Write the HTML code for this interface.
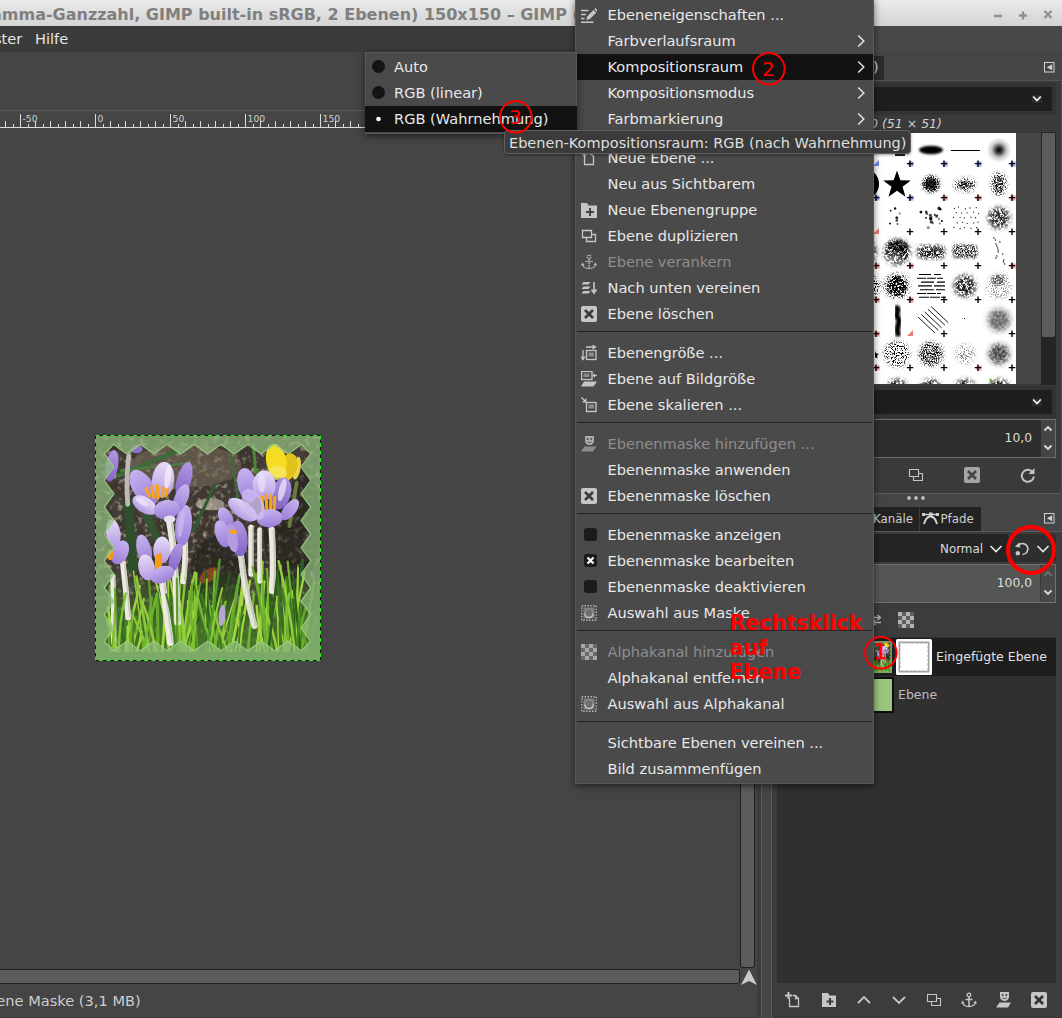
<!DOCTYPE html>
<html lang="de"><head><meta charset="utf-8"><title>GIMP</title>
<style>
html,body{margin:0;padding:0}
body{width:1062px;height:1018px;position:relative;overflow:hidden;background:#454545;font-family:"DejaVu Sans","Liberation Sans",sans-serif;font-size:14.6px;color:#e8e8e8}
.a{position:absolute}
.t{position:absolute;white-space:pre;line-height:1}
#titlebar{left:0;top:0;width:1062px;height:26px;background:linear-gradient(#ebebeb,#dcdcdc 60%,#d5d5d5)}
#title{left:-9px;top:7px;font-weight:700;font-size:16px;color:#7f7f7f}
#menubar{left:0;top:26px;width:756px;height:26px;background:#3b3b3b}
#rtop{left:756px;top:26px;width:306px;height:26px;background:#484848}
#dock{left:756px;top:52px;width:306px;height:966px;background:#454545}
/* menu */
.menu{background:#4a4a4a;box-shadow:0 2px 7px rgba(0,0,0,.55);border:1px solid #585858;box-sizing:border-box}
.mi{position:absolute;left:1px;right:0;height:26px}
.mi .lb{position:absolute;left:30.500px;top:5px;white-space:pre;line-height:16px}
.mi.sel{background:#121212}
.mi.dis .lb{color:#8e8e8e}
.sep{position:absolute;left:1px;right:1px;height:1px;background:#262626}
.arr{position:absolute;right:8.500px;top:6px;width:8px;height:14px}
.ic{position:absolute;left:4px;top:5px;width:16px;height:16px}
.chk{position:absolute;left:7px;top:6px;width:13px;height:13px;border-radius:3px;background:#1b1b1b}
.rad{position:absolute;left:7px;top:6px;width:13px;height:13px;border-radius:50%;background:#141414}
.red{color:#f00}
</style></head><body>
<!--BASE-->
<div id="titlebar" class="a"></div>
<div id="title" class="t">amma-Ganzzahl, GIMP built-in sRGB, 2 Ebenen) 150x150 – GIMP (</div>
<svg class="a" style="left:990px;top:6px" width="70" height="18" viewBox="0 0 70 18"><g stroke="#8f8f8f" stroke-width="2.300" fill="none"><path d="M4 10h8M29 9.5h8M33 5.5v8M54.500 5l7 7M61.500 5l-7 7"/></g></svg>
<div id="menubar" class="a"></div>
<div class="t" style="left:-6px;top:32px;color:#e6e6e6">ster</div>
<div class="t" style="left:35px;top:32px;color:#e6e6e6">Hilfe</div>
<div id="rtop" class="a"></div>
<div id="dock" class="a"></div>
<svg class="a" style="left:0;top:108px" width="742" height="22" viewBox="0 108 742 22"><path d="M0 110.5H742" stroke="#585858" stroke-width="1" fill="none"/><path d="M0 127.500H742 M20.5 114V128 M95.5 114V128 M170.5 114V128 M245.5 114V128 M320.5 114V128 M395.5 114V128 M470.5 114V128 M545.5 114V128 M620.5 114V128 M695.5 114V128 M5.5 121V128 M35.5 121V128 M50.5 121V128 M65.5 121V128 M80.5 121V128 M110.5 121V128 M125.5 121V128 M140.5 121V128 M155.5 121V128 M185.5 121V128 M200.5 121V128 M215.5 121V128 M230.5 121V128 M260.5 121V128 M275.5 121V128 M290.5 121V128 M305.5 121V128 M335.5 121V128 M350.5 121V128 M365.5 121V128 M380.5 121V128 M410.5 121V128 M425.5 121V128 M440.5 121V128 M455.5 121V128 M485.5 121V128 M500.5 121V128 M515.5 121V128 M530.5 121V128 M560.5 121V128 M575.5 121V128 M590.5 121V128 M605.5 121V128 M635.5 121V128 M650.5 121V128 M665.5 121V128 M680.5 121V128 M710.5 121V128 M725.5 121V128 M740.5 121V128 M13.5 124V128 M28.5 124V128 M43.5 124V128 M58.5 124V128 M73.5 124V128 M88.5 124V128 M103.5 124V128 M118.5 124V128 M133.5 124V128 M148.5 124V128 M163.5 124V128 M178.5 124V128 M193.5 124V128 M208.5 124V128 M223.5 124V128 M238.5 124V128 M253.5 124V128 M268.5 124V128 M283.5 124V128 M298.5 124V128 M313.5 124V128 M328.5 124V128 M343.5 124V128 M358.5 124V128 M373.5 124V128 M388.5 124V128 M403.5 124V128 M418.5 124V128 M433.5 124V128 M448.5 124V128 M463.5 124V128 M478.5 124V128 M493.5 124V128 M508.5 124V128 M523.5 124V128 M538.5 124V128 M553.5 124V128 M568.5 124V128 M583.5 124V128 M598.5 124V128 M613.5 124V128 M628.5 124V128 M643.5 124V128 M658.5 124V128 M673.5 124V128 M688.5 124V128 M703.5 124V128 M718.5 124V128 M733.5 124V128" stroke="#dcdcdc" stroke-width="1" fill="none"/><g font-family="DejaVu Sans, Liberation Sans, sans-serif" font-size="9.300" fill="#cfcfcf"><text x="22.5" y="122">-50</text><text x="97.5" y="122">0</text><text x="172.5" y="122">50</text><text x="247.5" y="122">100</text><text x="322.5" y="122">150</text><text x="397.5" y="122">200</text><text x="472.5" y="122">250</text><text x="547.5" y="122">300</text><text x="622.5" y="122">350</text><text x="697.5" y="122">400</text></g></svg>
<div class="a" style="left:740px;top:128px;width:15px;height:840px;box-sizing:border-box;background:#5c5c5c;border:1px solid #1f1f1f;border-radius:0 0 3px 3px"></div>
<div class="a" style="left:-4px;top:969px;width:744px;height:15px;box-sizing:border-box;background:#5c5c5c;border:1px solid #1f1f1f;border-radius:3px"></div>
<svg class="a" style="left:740px;top:968px" width="18" height="18" viewBox="0 0 18 18"><path d="M9 1.500L17 17 9 13 1 17Z" fill="#c9c9c9"/></svg>
<div class="t" style="left:-3.700px;top:994px;color:#cdcdcd">ene Maske (3,1 MB)</div>
<div class="a" style="left:0;top:1016.500px;width:757px;height:2px;background:#3b3b3b"></div>
<div class="a" style="left:757px;top:52px;width:20px;height:966px;background:#3c3c3c"></div>
<div class="a" style="left:761px;top:52px;width:11px;height:966px;background:#464646;border-left:1px solid #5a5a5a;border-right:1px solid #5a5a5a;box-sizing:border-box"></div>
<svg class="a" style="left:95px;top:435px" width="226" height="226" viewBox="0 0 226 226"><defs>
<filter id="soil" x="0" y="0" width="100%" height="100%"><feTurbulence type="fractalNoise" baseFrequency="0.02" numOctaves="3" seed="3" result="n"/><feColorMatrix type="matrix" values="0 0 0 0 0.060  0 0 0 0 0.055  0 0 0 0 0.050  2.400 0 0 0 -0.900"/></filter>
<filter id="soil2" x="0" y="0" width="100%" height="100%"><feTurbulence type="fractalNoise" baseFrequency="0.045" numOctaves="2" seed="11"/><feColorMatrix type="matrix" values="0 0 0 0 0.600  0 0 0 0 0.500  0 0 0 0 0.360  0 3.200 0 0 -1.700"/></filter>
<filter id="bl" x="-10%" y="-10%" width="120%" height="120%"><feGaussianBlur stdDeviation="2.200"/></filter>
<linearGradient id="pg" x1="0" y1="0" x2="0" y2="1"><stop offset="0" stop-color="#c6b3ee"/><stop offset="1" stop-color="#9b7ed8"/></linearGradient>
<linearGradient id="pl" x1="0" y1="0" x2="0" y2="1"><stop offset="0" stop-color="#e6dcf9"/><stop offset="1" stop-color="#b39ae4"/></linearGradient>
<linearGradient id="pd" x1="0" y1="0" x2="0" y2="1"><stop offset="0" stop-color="#b098e2"/><stop offset="1" stop-color="#8464c8"/></linearGradient>
<linearGradient id="st" x1="0" y1="0" x2="1" y2="0"><stop offset="0" stop-color="#c9c8bc"/><stop offset=".45" stop-color="#f4f3ea"/><stop offset="1" stop-color="#b8b8a8"/></linearGradient>
<clipPath id="ic"><rect x="42" y="42" width="935" height="935"/></clipPath>
</defs><g id="flw" transform="scale(0.24067) translate(-42 -42)"><g clip-path="url(#ic)"><rect x="42" y="42" width="935" height="935" fill="#3c352d"/>
<rect x="42" y="42" width="935" height="935" fill="#000" filter="url(#soil)"/>
<rect x="42" y="42" width="935" height="935" fill="#000" filter="url(#soil2)" opacity=".75"/>
<ellipse cx="420" cy="170" rx="230" ry="90" fill="#7a6e5c" opacity=".55" filter="url(#bl)"/>
<ellipse cx="520" cy="330" rx="60" ry="25" fill="#d8d2c0" opacity=".55" filter="url(#bl)"/>
<ellipse cx="860" cy="420" rx="120" ry="260" fill="#1c1a17" opacity=".55" filter="url(#bl)"/>
<ellipse cx="560" cy="600" rx="120" ry="140" fill="#1c1a17" opacity=".5" filter="url(#bl)"/>
<path d="M140 210L380 110" stroke="#3e6a38" stroke-width="18" stroke-linecap="round" fill="none"/>
<path d="M150 190L420 160" stroke="#4f7d45" stroke-width="10" stroke-linecap="round" fill="none"/>
<path d="M600 90L640 330" stroke="#3f6a3a" stroke-width="10" stroke-linecap="round" fill="none"/>
<path d="M700 80L710 200" stroke="#4c8a3a" stroke-width="12" stroke-linecap="round" fill="none"/>
<path d="M450 440L540 250" stroke="#2e5a32" stroke-width="12" stroke-linecap="round" fill="none"/>
<path d="M180 330L200 600" stroke="#2f4f2c" stroke-width="40" stroke-linecap="round" fill="none"/>
<path d="M250 360L300 470" stroke="#33552f" stroke-width="30" stroke-linecap="round" fill="none"/>
<path d="M880 240L850 420" stroke="#6a7a40" stroke-width="16" stroke-linecap="round" fill="none"/>
<path d="M905 560L870 900" stroke="#2f5a2c" stroke-width="14" stroke-linecap="round" fill="none"/>
<ellipse cx="515" cy="625" rx="45" ry="25" transform="rotate(-35 515 625)" fill="#9a4a22" opacity=".85"/>
<ellipse cx="200" cy="830" rx="42" ry="40" transform="rotate(0 200 830)" fill="#5c8650" />
<linearGradient id="gb" x1="0" y1="0" x2="0" y2="1"><stop offset="0" stop-color="#3a6a22" stop-opacity="0"/><stop offset=".5" stop-color="#3f7424" stop-opacity=".7"/><stop offset="1" stop-color="#4a8428" stop-opacity=".9"/></linearGradient><rect x="42" y="600" width="935" height="377" fill="url(#gb)"/>
<path d="M102 940Q95 804 103 667" stroke="#6aa82c" stroke-width="8" stroke-linecap="round" fill="none"/>
<path d="M284 940Q279 787 265 633" stroke="#5e9e28" stroke-width="10" stroke-linecap="round" fill="none"/>
<path d="M136 940Q114 878 91 816" stroke="#a4d640" stroke-width="6" stroke-linecap="round" fill="none"/>
<path d="M915 940Q949 867 960 795" stroke="#5e9e28" stroke-width="9" stroke-linecap="round" fill="none"/>
<path d="M380 940Q415 814 438 689" stroke="#2e5e1c" stroke-width="9" stroke-linecap="round" fill="none"/>
<path d="M351 940Q372 785 389 630" stroke="#6aa82c" stroke-width="7" stroke-linecap="round" fill="none"/>
<path d="M645 940Q646 793 662 647" stroke="#98cc3c" stroke-width="8" stroke-linecap="round" fill="none"/>
<path d="M848 940Q836 807 848 675" stroke="#2e5e1c" stroke-width="8" stroke-linecap="round" fill="none"/>
<path d="M843 940Q838 826 863 713" stroke="#3c7a22" stroke-width="8" stroke-linecap="round" fill="none"/>
<path d="M468 940Q457 804 470 668" stroke="#5e9e28" stroke-width="7" stroke-linecap="round" fill="none"/>
<path d="M130 940Q103 874 101 808" stroke="#98cc3c" stroke-width="8" stroke-linecap="round" fill="none"/>
<path d="M780 940Q737 779 711 618" stroke="#6aa82c" stroke-width="10" stroke-linecap="round" fill="none"/>
<path d="M193 940Q222 831 245 723" stroke="#98cc3c" stroke-width="9" stroke-linecap="round" fill="none"/>
<path d="M646 940Q617 870 608 800" stroke="#3c7a22" stroke-width="8" stroke-linecap="round" fill="none"/>
<path d="M728 940Q737 754 738 568" stroke="#8cc63a" stroke-width="10" stroke-linecap="round" fill="none"/>
<path d="M623 940Q666 793 686 647" stroke="#a4d640" stroke-width="10" stroke-linecap="round" fill="none"/>
<path d="M675 940Q676 870 704 800" stroke="#5e9e28" stroke-width="7" stroke-linecap="round" fill="none"/>
<path d="M445 940Q459 778 463 617" stroke="#8cc63a" stroke-width="11" stroke-linecap="round" fill="none"/>
<path d="M876 940Q879 815 860 689" stroke="#a4d640" stroke-width="8" stroke-linecap="round" fill="none"/>
<path d="M431 940Q452 810 494 680" stroke="#2e5e1c" stroke-width="8" stroke-linecap="round" fill="none"/>
<path d="M832 940Q807 814 779 689" stroke="#98cc3c" stroke-width="6" stroke-linecap="round" fill="none"/>
<path d="M352 940Q381 846 392 752" stroke="#2e5e1c" stroke-width="7" stroke-linecap="round" fill="none"/>
<path d="M548 940Q577 801 614 662" stroke="#2e5e1c" stroke-width="7" stroke-linecap="round" fill="none"/>
<path d="M639 940Q644 865 634 789" stroke="#a4d640" stroke-width="6" stroke-linecap="round" fill="none"/>
<path d="M162 940Q193 805 228 669" stroke="#a4d640" stroke-width="10" stroke-linecap="round" fill="none"/>
<path d="M558 940Q570 862 552 784" stroke="#98cc3c" stroke-width="11" stroke-linecap="round" fill="none"/>
<path d="M875 940Q847 812 820 685" stroke="#2e5e1c" stroke-width="9" stroke-linecap="round" fill="none"/>
<path d="M424 940Q405 778 401 617" stroke="#2e5e1c" stroke-width="7" stroke-linecap="round" fill="none"/>
<path d="M893 940Q885 761 885 582" stroke="#6aa82c" stroke-width="6" stroke-linecap="round" fill="none"/>
<path d="M561 940Q586 825 627 709" stroke="#a4d640" stroke-width="7" stroke-linecap="round" fill="none"/>
<path d="M846 940Q879 776 913 612" stroke="#a4d640" stroke-width="9" stroke-linecap="round" fill="none"/>
<path d="M841 940Q823 761 815 583" stroke="#8cc63a" stroke-width="6" stroke-linecap="round" fill="none"/>
<path d="M410 940Q402 774 378 608" stroke="#a4d640" stroke-width="10" stroke-linecap="round" fill="none"/>
<path d="M565 940Q603 870 626 800" stroke="#6aa82c" stroke-width="6" stroke-linecap="round" fill="none"/>
<path d="M791 940Q772 826 768 712" stroke="#2e5e1c" stroke-width="8" stroke-linecap="round" fill="none"/>
<path d="M172 940Q183 894 220 849" stroke="#6aa82c" stroke-width="8" stroke-linecap="round" fill="none"/>
<path d="M549 940Q527 815 507 690" stroke="#76b530" stroke-width="8" stroke-linecap="round" fill="none"/>
<path d="M897 940Q925 850 937 759" stroke="#76b530" stroke-width="9" stroke-linecap="round" fill="none"/>
<path d="M161 940Q158 840 159 740" stroke="#2e5e1c" stroke-width="7" stroke-linecap="round" fill="none"/>
<path d="M533 940Q568 774 603 607" stroke="#2e5e1c" stroke-width="6" stroke-linecap="round" fill="none"/>
<path d="M752 940Q747 790 769 641" stroke="#98cc3c" stroke-width="8" stroke-linecap="round" fill="none"/>
<path d="M502 940Q517 776 504 613" stroke="#2e5e1c" stroke-width="11" stroke-linecap="round" fill="none"/>
<path d="M740 940Q780 825 801 709" stroke="#76b530" stroke-width="6" stroke-linecap="round" fill="none"/>
<path d="M434 940Q420 786 379 632" stroke="#2e5e1c" stroke-width="6" stroke-linecap="round" fill="none"/>
<path d="M606 940Q624 873 664 806" stroke="#6aa82c" stroke-width="6" stroke-linecap="round" fill="none"/>
<path d="M617 940Q630 865 660 789" stroke="#2e5e1c" stroke-width="7" stroke-linecap="round" fill="none"/>
<path d="M538 940Q567 834 567 727" stroke="#5e9e28" stroke-width="8" stroke-linecap="round" fill="none"/>
<path d="M883 940Q890 886 879 831" stroke="#76b530" stroke-width="11" stroke-linecap="round" fill="none"/>
<path d="M816 940Q809 772 800 605" stroke="#3c7a22" stroke-width="9" stroke-linecap="round" fill="none"/>
<path d="M189 940Q160 857 127 773" stroke="#3c7a22" stroke-width="11" stroke-linecap="round" fill="none"/>
<path d="M891 940Q864 755 841 570" stroke="#76b530" stroke-width="6" stroke-linecap="round" fill="none"/>
<path d="M879 940Q839 809 817 679" stroke="#3c7a22" stroke-width="11" stroke-linecap="round" fill="none"/>
<path d="M401 940Q424 791 447 642" stroke="#a4d640" stroke-width="7" stroke-linecap="round" fill="none"/>
<path d="M245 940Q225 774 202 608" stroke="#98cc3c" stroke-width="6" stroke-linecap="round" fill="none"/>
<path d="M503 940Q498 791 507 641" stroke="#8cc63a" stroke-width="8" stroke-linecap="round" fill="none"/>
<path d="M381 940Q381 824 356 709" stroke="#3c7a22" stroke-width="10" stroke-linecap="round" fill="none"/>
<path d="M514 940Q475 789 450 637" stroke="#3c7a22" stroke-width="7" stroke-linecap="round" fill="none"/>
<path d="M561 940Q573 876 581 812" stroke="#98cc3c" stroke-width="8" stroke-linecap="round" fill="none"/>
<path d="M403 940Q385 785 351 630" stroke="#98cc3c" stroke-width="9" stroke-linecap="round" fill="none"/>
<path d="M495 940Q510 838 550 737" stroke="#2e5e1c" stroke-width="9" stroke-linecap="round" fill="none"/>
<path d="M405 940Q399 777 368 615" stroke="#6aa82c" stroke-width="9" stroke-linecap="round" fill="none"/>
<path d="M266 940Q269 838 291 736" stroke="#6aa82c" stroke-width="7" stroke-linecap="round" fill="none"/>
<path d="M387 940Q401 780 419 621" stroke="#8cc63a" stroke-width="10" stroke-linecap="round" fill="none"/>
<path d="M519 940Q536 774 540 609" stroke="#76b530" stroke-width="10" stroke-linecap="round" fill="none"/>
<path d="M352 940Q335 791 292 642" stroke="#a4d640" stroke-width="8" stroke-linecap="round" fill="none"/>
<path d="M596 940Q609 780 644 620" stroke="#76b530" stroke-width="10" stroke-linecap="round" fill="none"/>
<path d="M121 940Q118 893 99 847" stroke="#6aa82c" stroke-width="8" stroke-linecap="round" fill="none"/>
<path d="M882 940Q858 753 843 567" stroke="#76b530" stroke-width="8" stroke-linecap="round" fill="none"/>
<path d="M678 940Q686 821 703 701" stroke="#76b530" stroke-width="10" stroke-linecap="round" fill="none"/>
<path d="M179 940Q177 878 184 815" stroke="#98cc3c" stroke-width="8" stroke-linecap="round" fill="none"/>
<path d="M805 940Q802 826 797 713" stroke="#a4d640" stroke-width="6" stroke-linecap="round" fill="none"/>
<path d="M535 940Q519 822 484 705" stroke="#3c7a22" stroke-width="9" stroke-linecap="round" fill="none"/>
<path d="M741 940Q773 815 795 689" stroke="#2e5e1c" stroke-width="6" stroke-linecap="round" fill="none"/>
<path d="M204 940Q199 855 187 770" stroke="#3c7a22" stroke-width="6" stroke-linecap="round" fill="none"/>
<path d="M848 940Q835 791 836 643" stroke="#76b530" stroke-width="9" stroke-linecap="round" fill="none"/>
<path d="M554 940Q568 840 564 740" stroke="#3c7a22" stroke-width="6" stroke-linecap="round" fill="none"/>
<path d="M635 940Q650 788 655 635" stroke="#a4d640" stroke-width="7" stroke-linecap="round" fill="none"/>
<path d="M567 940Q562 862 555 783" stroke="#3c7a22" stroke-width="9" stroke-linecap="round" fill="none"/>
<path d="M149 940Q121 865 100 790" stroke="#6aa82c" stroke-width="6" stroke-linecap="round" fill="none"/>
<path d="M248 940Q237 894 227 848" stroke="#6aa82c" stroke-width="8" stroke-linecap="round" fill="none"/>
<path d="M187 940Q195 856 197 772" stroke="#6aa82c" stroke-width="9" stroke-linecap="round" fill="none"/>
<path d="M407 940Q417 777 457 613" stroke="#98cc3c" stroke-width="10" stroke-linecap="round" fill="none"/>
<path d="M215 940Q232 899 236 859" stroke="#a4d640" stroke-width="10" stroke-linecap="round" fill="none"/>
<path d="M887 940Q869 846 835 753" stroke="#5e9e28" stroke-width="7" stroke-linecap="round" fill="none"/>
<path d="M926 940Q958 803 971 667" stroke="#3c7a22" stroke-width="8" stroke-linecap="round" fill="none"/>
<path d="M435 940Q433 836 428 732" stroke="#98cc3c" stroke-width="9" stroke-linecap="round" fill="none"/>
<path d="M755 940Q767 769 757 598" stroke="#76b530" stroke-width="8" stroke-linecap="round" fill="none"/>
<path d="M738 940Q753 782 745 624" stroke="#2e5e1c" stroke-width="8" stroke-linecap="round" fill="none"/>
<path d="M419 940Q448 836 449 732" stroke="#8cc63a" stroke-width="7" stroke-linecap="round" fill="none"/>
<path d="M246 940Q262 829 278 718" stroke="#6aa82c" stroke-width="11" stroke-linecap="round" fill="none"/>
<path d="M302 940Q309 828 296 717" stroke="#76b530" stroke-width="11" stroke-linecap="round" fill="none"/>
<path d="M889 940Q934 794 953 649" stroke="#5e9e28" stroke-width="10" stroke-linecap="round" fill="none"/>
<path d="M518 940Q534 809 571 678" stroke="#98cc3c" stroke-width="8" stroke-linecap="round" fill="none"/>
<path d="M267 940Q244 785 214 630" stroke="#8cc63a" stroke-width="11" stroke-linecap="round" fill="none"/>
<path d="M183 940Q188 868 199 795" stroke="#76b530" stroke-width="6" stroke-linecap="round" fill="none"/>
<path d="M890 940Q870 832 864 724" stroke="#2e5e1c" stroke-width="7" stroke-linecap="round" fill="none"/>
<path d="M713 940Q729 795 746 650" stroke="#a4d640" stroke-width="10" stroke-linecap="round" fill="none"/>
<path d="M350 940Q347 782 346 623" stroke="#98cc3c" stroke-width="8" stroke-linecap="round" fill="none"/>
<path d="M414 940Q436 866 482 791" stroke="#2e5e1c" stroke-width="8" stroke-linecap="round" fill="none"/>
<path d="M536 940Q550 838 585 735" stroke="#76b530" stroke-width="11" stroke-linecap="round" fill="none"/>
<path d="M265 940Q237 865 198 790" stroke="#8cc63a" stroke-width="9" stroke-linecap="round" fill="none"/>
<path d="M359 940Q389 778 401 617" stroke="#76b530" stroke-width="9" stroke-linecap="round" fill="none"/>
<path d="M606 940Q642 788 658 635" stroke="#a4d640" stroke-width="11" stroke-linecap="round" fill="none"/>
<path d="M324 940Q312 818 302 697" stroke="#3c7a22" stroke-width="11" stroke-linecap="round" fill="none"/>
<path d="M321 940Q336 818 326 696" stroke="#a4d640" stroke-width="11" stroke-linecap="round" fill="none"/>
<path d="M378 940Q364 788 375 636" stroke="#5e9e28" stroke-width="10" stroke-linecap="round" fill="none"/>
<path d="M529 940Q497 852 471 763" stroke="#3c7a22" stroke-width="7" stroke-linecap="round" fill="none"/>
<path d="M416 940Q438 816 447 693" stroke="#6aa82c" stroke-width="10" stroke-linecap="round" fill="none"/>
<path d="M884 940Q843 793 823 647" stroke="#5e9e28" stroke-width="9" stroke-linecap="round" fill="none"/>
<path d="M348 940Q332 864 345 787" stroke="#8cc63a" stroke-width="7" stroke-linecap="round" fill="none"/>
<path d="M927 940Q906 865 893 789" stroke="#5e9e28" stroke-width="10" stroke-linecap="round" fill="none"/>
<path d="M749 940Q718 846 714 752" stroke="#a4d640" stroke-width="10" stroke-linecap="round" fill="none"/>
<path d="M182 130Q170 230 178 330" stroke="#bdb9b6" stroke-width="20" stroke-linecap="round" fill="none"/>
<path d="M350 395Q375 520 385 820" stroke="#ecebe2" stroke-width="28" stroke-linecap="round" fill="none" opacity="1"/><path d="M350 395Q375 520 385 820" stroke="#a9a898" stroke-width="8" fill="none" opacity=".5" transform="translate(8 0)"/>
<path d="M416 490Q420 560 408 650" stroke="#ecebe2" stroke-width="24" stroke-linecap="round" fill="none" opacity="1"/><path d="M416 490Q420 560 408 650" stroke="#a9a898" stroke-width="7" fill="none" opacity=".5" transform="translate(7 0)"/>
<path d="M690 425L690 620" stroke="#ecebe2" stroke-width="22" stroke-linecap="round" fill="none" opacity="1"/><path d="M690 425L690 620" stroke="#a9a898" stroke-width="7" fill="none" opacity=".5" transform="translate(7 0)"/>
<path d="M726 435L726 650" stroke="#ecebe2" stroke-width="20" stroke-linecap="round" fill="none" opacity="1"/><path d="M726 435L726 650" stroke="#a9a898" stroke-width="6" fill="none" opacity=".5" transform="translate(6 0)"/>
<path d="M776 435Q785 560 778 690" stroke="#ecebe2" stroke-width="26" stroke-linecap="round" fill="none" opacity="1"/><path d="M776 435Q785 560 778 690" stroke="#a9a898" stroke-width="8" fill="none" opacity=".5" transform="translate(8 0)"/>
<path d="M648 540Q665 700 705 835" stroke="#ecebe2" stroke-width="26" stroke-linecap="round" fill="none" opacity="0.92"/><path d="M648 540Q665 700 705 835" stroke="#a9a898" stroke-width="8" fill="none" opacity=".5" transform="translate(8 0)"/>
<path d="M158 575Q172 690 180 800" stroke="#ecebe2" stroke-width="24" stroke-linecap="round" fill="none" opacity="1"/><path d="M158 575Q172 690 180 800" stroke="#a9a898" stroke-width="7" fill="none" opacity=".5" transform="translate(7 0)"/>
<path d="M116 630Q120 760 120 905" stroke="#ecebe2" stroke-width="22" stroke-linecap="round" fill="none" opacity="1"/><path d="M116 630Q120 760 120 905" stroke="#a9a898" stroke-width="7" fill="none" opacity=".5" transform="translate(7 0)"/>
<path d="M322 655Q340 780 355 905" stroke="#ecebe2" stroke-width="28" stroke-linecap="round" fill="none" opacity="1"/><path d="M322 655Q340 780 355 905" stroke="#a9a898" stroke-width="8" fill="none" opacity=".5" transform="translate(8 0)"/>
<path d="M171 940Q181 888 178 837" stroke="#a4d640" stroke-width="10" stroke-linecap="round" fill="none"/>
<path d="M860 940Q876 841 878 743" stroke="#2e5e1c" stroke-width="11" stroke-linecap="round" fill="none"/>
<path d="M642 940Q654 848 669 755" stroke="#a4d640" stroke-width="7" stroke-linecap="round" fill="none"/>
<path d="M879 940Q877 767 886 594" stroke="#a4d640" stroke-width="8" stroke-linecap="round" fill="none"/>
<path d="M798 940Q782 843 738 746" stroke="#98cc3c" stroke-width="11" stroke-linecap="round" fill="none"/>
<path d="M407 940Q434 857 455 774" stroke="#a4d640" stroke-width="9" stroke-linecap="round" fill="none"/>
<path d="M592 940Q553 846 529 752" stroke="#8cc63a" stroke-width="9" stroke-linecap="round" fill="none"/>
<path d="M386 940Q382 789 382 639" stroke="#5e9e28" stroke-width="9" stroke-linecap="round" fill="none"/>
<path d="M616 940Q602 869 562 799" stroke="#6aa82c" stroke-width="7" stroke-linecap="round" fill="none"/>
<path d="M881 940Q863 786 838 633" stroke="#3c7a22" stroke-width="10" stroke-linecap="round" fill="none"/>
<path d="M636 940Q644 848 654 756" stroke="#3c7a22" stroke-width="8" stroke-linecap="round" fill="none"/>
<path d="M424 940Q461 797 480 654" stroke="#6aa82c" stroke-width="6" stroke-linecap="round" fill="none"/>
<path d="M887 940Q888 850 918 759" stroke="#6aa82c" stroke-width="10" stroke-linecap="round" fill="none"/>
<path d="M133 940Q108 848 95 757" stroke="#a4d640" stroke-width="9" stroke-linecap="round" fill="none"/>
<path d="M376 940Q372 822 338 704" stroke="#3c7a22" stroke-width="8" stroke-linecap="round" fill="none"/>
<path d="M297 940Q309 826 299 711" stroke="#6aa82c" stroke-width="10" stroke-linecap="round" fill="none"/>
<path d="M895 940Q879 782 864 623" stroke="#2e5e1c" stroke-width="10" stroke-linecap="round" fill="none"/>
<path d="M763 940Q781 759 806 578" stroke="#2e5e1c" stroke-width="10" stroke-linecap="round" fill="none"/>
<path d="M872 940Q852 753 805 566" stroke="#98cc3c" stroke-width="10" stroke-linecap="round" fill="none"/>
<path d="M294 940Q279 845 244 750" stroke="#98cc3c" stroke-width="10" stroke-linecap="round" fill="none"/>
<path d="M456 940Q440 816 434 692" stroke="#76b530" stroke-width="10" stroke-linecap="round" fill="none"/>
<path d="M111 940Q132 810 125 680" stroke="#6aa82c" stroke-width="9" stroke-linecap="round" fill="none"/>
<path d="M539 940Q495 833 471 725" stroke="#76b530" stroke-width="10" stroke-linecap="round" fill="none"/>
<path d="M118 940Q126 861 122 782" stroke="#8cc63a" stroke-width="8" stroke-linecap="round" fill="none"/>
<path d="M410 940Q433 800 446 660" stroke="#6aa82c" stroke-width="9" stroke-linecap="round" fill="none"/>
<path d="M752 940Q738 765 697 591" stroke="#6aa82c" stroke-width="9" stroke-linecap="round" fill="none"/>
<ellipse cx="570" cy="792" rx="14" ry="45" transform="rotate(5 570 792)" fill="#b6a6d6" />
<ellipse cx="880" cy="180" rx="16" ry="48" transform="rotate(10 880 180)" fill="#e9d44a" />
<ellipse cx="845" cy="175" rx="36" ry="58" transform="rotate(15 845 175)" fill="#e3c21a" />
<ellipse cx="795" cy="150" rx="42" ry="72" transform="rotate(-10 795 150)" fill="#f4dc22" />
<ellipse cx="800" cy="200" rx="40" ry="30" transform="rotate(0 800 200)" fill="#f8e870" opacity=".7"/>
<ellipse cx="112" cy="170" rx="26" ry="66" transform="rotate(10 112 170)" fill="url(#pd)" />
<ellipse cx="215" cy="100" rx="25" ry="18" transform="rotate(0 215 100)" fill="#8a72c0" />
<ellipse cx="118" cy="450" rx="30" ry="58" transform="rotate(-8 118 450)" fill="url(#pl)" />
<ellipse cx="146" cy="530" rx="34" ry="52" transform="rotate(25 146 530)" fill="url(#pg)" />
<ellipse cx="105" cy="540" rx="14" ry="22" transform="rotate(0 105 540)" fill="#f29a1a" />
<ellipse cx="120" cy="545" rx="30" ry="40" transform="rotate(0 120 545)" fill="url(#pd)" opacity=".0"/>
<ellipse cx="410" cy="418" rx="34" ry="86" transform="rotate(6 410 418)" fill="url(#pg)" />
<ellipse cx="400" cy="410" rx="12" ry="60" transform="rotate(8 400 410)" fill="#cdbcf0" opacity=".7"/>
<ellipse cx="412" cy="228" rx="30" ry="76" transform="rotate(16 412 228)" fill="url(#pd)" />
<ellipse cx="243" cy="262" rx="44" ry="84" transform="rotate(-32 243 262)" fill="url(#pg)" />
<ellipse cx="325" cy="228" rx="46" ry="74" transform="rotate(6 325 228)" fill="url(#pl)" />
<ellipse cx="400" cy="305" rx="28" ry="62" transform="rotate(22 400 305)" fill="url(#pg)" />
<path d="M268 295L254 266" stroke="#f7a41c" stroke-width="13" stroke-linecap="round"/>
<path d="M286 301L278 257" stroke="#f7a41c" stroke-width="13" stroke-linecap="round"/>
<path d="M304 304L301 252" stroke="#f7a41c" stroke-width="13" stroke-linecap="round"/>
<path d="M322 298L325 261" stroke="#f7a41c" stroke-width="13" stroke-linecap="round"/>
<path d="M336 294L343 268" stroke="#f7a41c" stroke-width="13" stroke-linecap="round"/>
<ellipse cx="248" cy="333" rx="56" ry="32" transform="rotate(32 248 333)" fill="url(#pl)" />
<ellipse cx="340" cy="352" rx="54" ry="40" transform="rotate(-8 340 352)" fill="url(#pg)" />
<ellipse cx="352" cy="392" rx="24" ry="16" transform="rotate(0 352 392)" fill="#e6e0f0" />
<ellipse cx="345" cy="215" rx="14" ry="50" transform="rotate(8 345 215)" fill="#f4effc" opacity=".75"/>
<ellipse cx="238" cy="320" rx="30" ry="12" transform="rotate(30 238 320)" fill="#efe8fb" opacity=".7"/>
<ellipse cx="675" cy="250" rx="40" ry="72" transform="rotate(-14 675 250)" fill="url(#pg)" />
<ellipse cx="815" cy="285" rx="40" ry="68" transform="rotate(16 815 285)" fill="url(#pd)" />
<ellipse cx="745" cy="252" rx="48" ry="62" transform="rotate(0 745 252)" fill="url(#pl)" />
<ellipse cx="852" cy="352" rx="26" ry="52" transform="rotate(38 852 352)" fill="url(#pg)" />
<path d="M740 352L734 301" stroke="#f7a41c" stroke-width="13" stroke-linecap="round"/>
<path d="M756 352L753 292" stroke="#f7a41c" stroke-width="13" stroke-linecap="round"/>
<path d="M772 352L772 294" stroke="#f7a41c" stroke-width="13" stroke-linecap="round"/>
<path d="M786 352L789 302" stroke="#f7a41c" stroke-width="13" stroke-linecap="round"/>
<ellipse cx="655" cy="352" rx="70" ry="34" transform="rotate(36 655 352)" fill="url(#pl)" />
<ellipse cx="768" cy="388" rx="54" ry="38" transform="rotate(-4 768 388)" fill="url(#pg)" />
<ellipse cx="700" cy="330" rx="40" ry="70" transform="rotate(-28 700 330)" fill="#cdbcf0" opacity=".8"/>
<ellipse cx="820" cy="270" rx="14" ry="48" transform="rotate(14 820 270)" fill="#f2ecfc" opacity=".7"/>
<ellipse cx="735" cy="240" rx="16" ry="40" transform="rotate(0 735 240)" fill="#efe8fb" opacity=".6"/>
<ellipse cx="585" cy="385" rx="28" ry="46" transform="rotate(-28 585 385)" fill="url(#pg)" />
<ellipse cx="572" cy="452" rx="30" ry="58" transform="rotate(-18 572 452)" fill="url(#pg)" />
<ellipse cx="640" cy="472" rx="36" ry="74" transform="rotate(-6 640 472)" fill="url(#pd)" />
<ellipse cx="612" cy="470" rx="22" ry="60" transform="rotate(-10 612 470)" fill="#b39ce4" />
<ellipse cx="616" cy="444" rx="16" ry="9" transform="rotate(0 616 444)" fill="#f7a41c" />
<ellipse cx="246" cy="520" rx="30" ry="66" transform="rotate(-14 246 520)" fill="url(#pg)" />
<ellipse cx="376" cy="552" rx="24" ry="62" transform="rotate(16 376 552)" fill="url(#pd)" />
<ellipse cx="320" cy="520" rx="36" ry="56" transform="rotate(2 320 520)" fill="url(#pl)" />
<path d="M296 600L300 545M312 600L312 540" stroke="#f79a14" stroke-width="15" stroke-linecap="round"/>
<ellipse cx="256" cy="592" rx="34" ry="54" transform="rotate(-10 256 592)" fill="url(#pl)" />
<ellipse cx="322" cy="622" rx="52" ry="34" transform="rotate(-22 322 622)" fill="url(#pg)" />
<path d="M240 940Q267 820 300 700" stroke="#6ab82e" stroke-width="10" stroke-linecap="round" fill="none"/>
<path d="M450 940Q457 815 470 690" stroke="#7cc436" stroke-width="10" stroke-linecap="round" fill="none"/>
<path d="M500 940Q543 750 560 560" stroke="#4f9a2a" stroke-width="10" stroke-linecap="round" fill="none"/>
<path d="M600 940Q618 790 640 640" stroke="#5aa52c" stroke-width="10" stroke-linecap="round" fill="none"/>
<path d="M760 940Q740 800 740 660" stroke="#67b430" stroke-width="10" stroke-linecap="round" fill="none"/>
<path d="M830 940Q828 820 850 700" stroke="#7cc436" stroke-width="10" stroke-linecap="round" fill="none"/>
<path d="M140 940Q143 820 170 700" stroke="#7cc436" stroke-width="10" stroke-linecap="round" fill="none"/>
<path d="M420 940Q412 850 400 760" stroke="#8fd044" stroke-width="10" stroke-linecap="round" fill="none"/>
<path d="M880 940Q886 840 900 740" stroke="#3f8a24" stroke-width="10" stroke-linecap="round" fill="none"/>
<path d="M42 42H977V977H42Z M119 81L175 121L231 81L287 121L342 81L398 121L454 81L510 121L565 81L621 121L677 81L732 121L788 81L844 121L900 81L918 101L938 119L898 175L938 231L898 287L938 342L898 398L938 454L898 510L938 565L898 621L938 677L898 732L938 788L898 844L938 900L918 918L900 938L844 898L788 938L732 898L677 938L621 898L565 938L510 898L454 938L398 898L342 938L287 898L231 938L175 898L119 938L101 918L81 900L121 844L81 788L121 732L81 677L121 621L81 565L121 510L81 454L121 398L81 342L121 287L81 231L121 175L81 119L101 101Z" fill="#8fba7e" fill-opacity=".74" fill-rule="evenodd"/>
<path d="M119 81L175 121L231 81L287 121L342 81L398 121L454 81L510 121L565 81L621 121L677 81L732 121L788 81L844 121L900 81L918 101L938 119L898 175L938 231L898 287L938 342L898 398L938 454L898 510L938 565L898 621L938 677L898 732L938 788L898 844L938 900L918 918L900 938L844 898L788 938L732 898L677 938L621 898L565 938L510 898L454 938L398 898L342 938L287 898L231 938L175 898L119 938L101 918L81 900L121 844L81 788L121 732L81 677L121 621L81 565L121 510L81 454L121 398L81 342L121 287L81 231L121 175L81 119L101 101Z" fill="none" stroke="#9fd088" stroke-width="5" stroke-linejoin="round" opacity=".85"/></g></g><rect x=".5" y=".5" width="225" height="225" fill="none" stroke="#101010" stroke-width="1"/><rect x=".5" y=".5" width="225" height="225" fill="none" stroke="#27ea27" stroke-width="1" stroke-dasharray="4 3.500"/></svg>
<div class="a" style="left:780px;top:56px;width:104px;height:24px;background:#2b2b2b"></div>
<div class="t" style="left:873px;top:60px;color:#cfcfcf">)</div>
<svg class="a" style="left:1044px;top:62px" width="11" height="11" viewBox="0 0 11 11"><rect x=".5" y=".5" width="9.500" height="9.500" fill="none" stroke="#cfcfcf"/><path d="M8.200 2.200V8.300L2.800 5.250Z" fill="#cfcfcf"/></svg>
<div class="a" style="left:772px;top:80px;width:290px;height:414px;background:#3a3a3a;border-top:1px solid #555;border-right:1px solid #4c4c4c;border-bottom:1px solid #5a5a5a;box-sizing:border-box"></div>
<div class="a" style="left:777px;top:83px;width:279px;height:32px;background:#333"></div>
<div class="a" style="left:780px;top:87px;width:272px;height:24px;background:#1e1e1e"></div>
<svg class="a" style="left:1032px;top:95px" width="10" height="8" viewBox="0 0 10 8"><rect x="0" y="0" width="10" height="8" fill="#2c2c2c"/><path d="M1.200 1.500L5 5.500 8.800 1.500" fill="none" stroke="#f2f2f2" stroke-width="1.800"/></svg>
<div class="t" style="left:870px;top:118px;font-style:italic;color:#cfcfcf;font-size:12.500px">0 (51 × 51)</div>
<!--BRUSH-->
<svg class="a" style="left:780px;top:133px" width="236" height="251" viewBox="780 133 236 251"><defs>
<filter id="b1" x="-30%" y="-30%" width="160%" height="160%"><feGaussianBlur stdDeviation="1.200"/></filter>
<filter id="b3" x="-50%" y="-50%" width="200%" height="200%"><feGaussianBlur stdDeviation="3"/></filter>
<filter id="spA" x="-20%" y="-20%" width="140%" height="140%"><feGaussianBlur in="SourceGraphic" stdDeviation="1.500" result="b"/><feTurbulence type="fractalNoise" baseFrequency="0.750" numOctaves="2" seed="2" result="n"/><feColorMatrix in="n" type="matrix" values="0 0 0 0 0  0 0 0 0 0  0 0 0 0 0  0 0 0 9 -3.900" result="m"/><feComposite in="m" in2="b" operator="in"/></filter>
<filter id="spB" x="-20%" y="-20%" width="140%" height="140%"><feGaussianBlur in="SourceGraphic" stdDeviation="2" result="b"/><feTurbulence type="fractalNoise" baseFrequency="0.900" numOctaves="1" seed="8" result="n"/><feColorMatrix in="n" type="matrix" values="0 0 0 0 0  0 0 0 0 0  0 0 0 0 0  0 0 0 12 -6.300" result="m"/><feComposite in="m" in2="b" operator="in"/></filter>
<filter id="spC" x="-20%" y="-20%" width="140%" height="140%"><feGaussianBlur in="SourceGraphic" stdDeviation="2.500" result="b"/><feTurbulence type="fractalNoise" baseFrequency="0.350" numOctaves="3" seed="5" result="n"/><feColorMatrix in="n" type="matrix" values="0 0 0 0 0  0 0 0 0 0  0 0 0 0 0  0 0 0 5 -1.900" result="m"/><feComposite in="m" in2="b" operator="in"/></filter>
<filter id="spD" x="-20%" y="-20%" width="140%" height="140%"><feGaussianBlur in="SourceGraphic" stdDeviation="1" result="b"/><feTurbulence type="fractalNoise" baseFrequency="0.550" numOctaves="2" seed="13" result="n"/><feColorMatrix in="n" type="matrix" values="0 0 0 0 0  0 0 0 0 0  0 0 0 0 0  0 0 0 7 -2.700" result="m"/><feComposite in="m" in2="b" operator="in"/></filter>
<radialGradient id="soft"><stop offset="0" stop-color="#000" stop-opacity="1"/><stop offset=".22" stop-color="#000" stop-opacity=".8"/><stop offset=".6" stop-color="#000" stop-opacity=".22"/><stop offset="1" stop-color="#000" stop-opacity="0"/></radialGradient>
</defs><rect x="780" y="133" width="236" height="251" fill="#fff"/><rect x="895" y="147" width="10" height="9" fill="#222"/><ellipse cx="931" cy="150" rx="12" ry="4.2" fill="#000" opacity="1" filter="url(#b1)"/><path d="M951 150.5h29" stroke="#000" stroke-width="1"/><circle cx="999" cy="150" r="12.500" fill="url(#soft)"/><circle cx="863" cy="184" r="16" fill="#000" opacity="1"/><path d="M897.0 170.5L900.4 180.3L910.8 180.5L902.5 186.8L905.5 196.7L897.0 190.8L888.5 196.7L891.5 186.8L883.2 180.5L893.6 180.3Z" fill="#000"/><circle cx="931" cy="184" r="9" fill="#000" opacity="1" filter="url(#spA)"/><circle cx="931" cy="184" r="6" fill="#000" opacity="0.8" filter="url(#b1)"/><ellipse cx="965" cy="185" rx="11" ry="7" fill="#000" opacity="1" filter="url(#spB)"/><ellipse cx="965" cy="185" rx="7" ry="4" fill="#000" opacity="0.8" filter="url(#spD)"/><ellipse cx="999" cy="184" rx="8" ry="12" fill="#000" opacity="1" filter="url(#spB)"/><ellipse cx="999" cy="184" rx="5" ry="9" fill="#000" opacity="0.7" filter="url(#spD)"/><circle cx="897.5" cy="224.0" r="0.9" fill="#000" opacity="0.76"/><circle cx="896.5" cy="217.5" r="0.6" fill="#000" opacity="0.90"/><circle cx="896.8" cy="220.6" r="1.4" fill="#000" opacity="0.68"/><circle cx="899.7" cy="213.5" r="1.1" fill="#000" opacity="0.49"/><circle cx="890.7" cy="210.8" r="1.0" fill="#000" opacity="0.84"/><circle cx="896.7" cy="217.4" r="1.2" fill="#000" opacity="0.75"/><circle cx="896.9" cy="218.3" r="1.3" fill="#000" opacity="0.68"/><circle cx="895.1" cy="208.5" r="1.2" fill="#000" opacity="0.95"/><circle cx="890.0" cy="223.4" r="1.0" fill="#000" opacity="0.96"/><circle cx="931.9" cy="217.1" r="0.8" fill="#000" opacity="0.53"/><circle cx="936.5" cy="216.8" r="1.3" fill="#000" opacity="0.58"/><circle cx="926.0" cy="217.8" r="1.1" fill="#000" opacity="0.75"/><circle cx="920.9" cy="212.1" r="1.4" fill="#000" opacity="0.96"/><circle cx="939.0" cy="207.9" r="1.4" fill="#000" opacity="0.50"/><circle cx="939.0" cy="208.4" r="1.6" fill="#000" opacity="0.74"/><circle cx="930.4" cy="215.3" r="1.5" fill="#000" opacity="0.74"/><circle cx="930.8" cy="218.8" r="1.6" fill="#000" opacity="0.99"/><circle cx="939.8" cy="223.5" r="1.1" fill="#000" opacity="0.49"/><circle cx="928.3" cy="227.6" r="1.6" fill="#000" opacity="0.43"/><circle cx="930.6" cy="217.6" r="1.4" fill="#000" opacity="0.60"/><circle cx="940.3" cy="209.3" r="1.2" fill="#000" opacity="1.00"/><circle cx="930.6" cy="218.9" r="1.3" fill="#000" opacity="0.42"/><circle cx="932.7" cy="223.0" r="1.3" fill="#000" opacity="0.49"/><circle cx="941.9" cy="221.0" r="1.0" fill="#000" opacity="0.98"/><circle cx="934.9" cy="215.0" r="1.2" fill="#000" opacity="0.71"/><circle cx="926.2" cy="211.9" r="1.3" fill="#000" opacity="0.77"/><circle cx="937.1" cy="215.6" r="1.1" fill="#000" opacity="0.83"/><circle cx="931.3" cy="221.9" r="1.7" fill="#000" opacity="0.71"/><circle cx="930.9" cy="218.0" r="1.1" fill="#000" opacity="0.75"/><circle cx="938.9" cy="219.0" r="1.3" fill="#000" opacity="0.44"/><circle cx="926.8" cy="213.7" r="1.4" fill="#000" opacity="0.61"/><circle cx="954.4" cy="208.5" r=".600" fill="#000"/><circle cx="958.5" cy="207.1" r=".600" fill="#000"/><circle cx="965.4" cy="208.9" r=".600" fill="#000"/><circle cx="970.0" cy="207.9" r=".600" fill="#000"/><circle cx="976.2" cy="207.6" r=".600" fill="#000"/><circle cx="956.2" cy="212.6" r=".600" fill="#000"/><circle cx="961.7" cy="213.2" r=".600" fill="#000"/><circle cx="967.1" cy="212.8" r=".600" fill="#000"/><circle cx="973.5" cy="212.1" r=".600" fill="#000"/><circle cx="978.6" cy="213.5" r=".600" fill="#000"/><circle cx="953.6" cy="217.4" r=".600" fill="#000"/><circle cx="960.1" cy="217.5" r=".600" fill="#000"/><circle cx="964.4" cy="217.9" r=".600" fill="#000"/><circle cx="970.9" cy="217.2" r=".600" fill="#000"/><circle cx="975.6" cy="217.7" r=".600" fill="#000"/><circle cx="957.2" cy="222.9" r=".600" fill="#000"/><circle cx="962.7" cy="222.3" r=".600" fill="#000"/><circle cx="967.2" cy="223.3" r=".600" fill="#000"/><circle cx="973.8" cy="222.9" r=".600" fill="#000"/><circle cx="978.0" cy="222.2" r=".600" fill="#000"/><circle cx="954.1" cy="227.4" r=".600" fill="#000"/><circle cx="960.1" cy="228.7" r=".600" fill="#000"/><circle cx="964.4" cy="227.6" r=".600" fill="#000"/><circle cx="971.1" cy="228.3" r=".600" fill="#000"/><circle cx="976.6" cy="227.7" r=".600" fill="#000"/><circle cx="999" cy="218" r="11" fill="#000" opacity="0.75" filter="url(#spC)"/><circle cx="999" cy="218" r="10" fill="#000" opacity="0.7" filter="url(#spB)"/><circle cx="863" cy="252" r="13" fill="#000" opacity="1" filter="url(#spC)"/><circle cx="897" cy="252" r="12.5" fill="#000" opacity="1" filter="url(#spC)"/><circle cx="897" cy="252" r="12" fill="#000" opacity="1" filter="url(#spB)"/><ellipse cx="899" cy="246" rx="9" ry="6" fill="#000" opacity="0.5" filter="url(#b1)"/><ellipse cx="894" cy="259" rx="8" ry="5" fill="#fff" opacity="0.55" filter="url(#b3)"/><rect x="918" y="246" width="26" height="12" rx="3" fill="#000" filter="url(#spC)" opacity=".8"/><rect x="918" y="246" width="26" height="12" rx="3" fill="#000" filter="url(#spB)"/><rect x="953" y="245" width="24" height="13" rx="3" fill="#000" filter="url(#spB)"/><rect x="953" y="245" width="24" height="13" rx="3" fill="#000" filter="url(#spD)" opacity=".45"/><circle cx="993.9" cy="238.0" r=".7" fill="#000"/><circle cx="995.5" cy="240.0" r=".7" fill="#000"/><circle cx="999.9" cy="242.0" r=".7" fill="#000"/><circle cx="996.0" cy="244.0" r=".7" fill="#000"/><circle cx="996.9" cy="246.0" r=".7" fill="#000"/><circle cx="997.7" cy="248.0" r=".7" fill="#000"/><circle cx="998.1" cy="250.0" r=".7" fill="#000"/><circle cx="998.3" cy="252.0" r=".7" fill="#000"/><circle cx="1002.7" cy="254.0" r=".7" fill="#000"/><circle cx="996.8" cy="256.0" r=".7" fill="#000"/><circle cx="995.9" cy="258.0" r=".7" fill="#000"/><circle cx="1003.7" cy="260.0" r=".7" fill="#000"/><circle cx="1003.5" cy="262.0" r=".7" fill="#000"/><circle cx="1004.7" cy="264.0" r=".7" fill="#000"/><circle cx="871" cy="286" r="10" fill="#000" opacity="1" filter="url(#spB)"/><circle cx="897" cy="286" r="10" fill="#000" opacity="1" filter="url(#spD)"/><circle cx="897" cy="286" r="13" fill="#000" opacity="1" filter="url(#spB)"/><circle cx="897" cy="286" r="8" fill="#000" opacity="1" filter="url(#spB)"/><path d="M919 274.5h22" stroke="#000" stroke-width="1.100" stroke-dasharray="12 3"/><path d="M917 278.3h26" stroke="#000" stroke-width="1.100" stroke-dasharray="9 1"/><path d="M921 282.1h24" stroke="#000" stroke-width="1.100" stroke-dasharray="13 3"/><path d="M918 285.9h27" stroke="#000" stroke-width="1.100" stroke-dasharray="14 2"/><path d="M920 289.7h25" stroke="#000" stroke-width="1.100" stroke-dasharray="14 2"/><path d="M917 293.5h24" stroke="#000" stroke-width="1.100" stroke-dasharray="9 1"/><path d="M919 297.3h27" stroke="#000" stroke-width="1.100" stroke-dasharray="10 1"/><circle cx="965" cy="286" r="11" fill="#000" opacity="0.85" filter="url(#spC)"/><circle cx="965" cy="286" r="10" fill="#000" opacity="0.6" filter="url(#spB)"/><circle cx="999" cy="286" r="13" fill="#000" opacity="0.45" filter="url(#spB)"/><ellipse cx="998" cy="280" rx="7" ry="5" fill="#000" opacity="0.6" filter="url(#spD)"/><path d="M897 308c3 3 -3 6 1 10s-3 8 0 16" stroke="#000" stroke-width="5.500" stroke-linecap="round" fill="none" filter="url(#b1)"/><path d="M918.0 317.0l17 16" stroke="#000" stroke-width=".900"/><path d="M921.3 314.4l17 16" stroke="#000" stroke-width=".900"/><path d="M924.6 311.8l17 16" stroke="#000" stroke-width=".900"/><path d="M927.9 309.2l17 16" stroke="#000" stroke-width=".900"/><path d="M931.2 306.6l17 16" stroke="#000" stroke-width=".900"/><rect x="964" y="318" width="1" height="1" fill="#000"/><circle cx="999" cy="320" r="10.5" fill="#333" opacity="0.55" filter="url(#b3)"/><circle cx="999" cy="320" r="11" fill="#000" opacity="0.3" filter="url(#spC)"/><path d="M875 351l1.200 2.500 2.800.3-2 2 .6 2.800-2.600-1.400z" fill="#000"/><circle cx="897" cy="354" r="13" fill="#000" opacity="1" filter="url(#spB)"/><circle cx="931" cy="354" r="12.5" fill="#000" opacity="1" filter="url(#spB)"/><circle cx="931" cy="354" r="11" fill="#000" opacity="0.55" filter="url(#spA)"/><circle cx="965" cy="354" r="10" fill="#000" opacity="0.5" filter="url(#spB)"/><circle cx="999" cy="354" r="9.5" fill="#222" opacity="0.55" filter="url(#b3)"/><circle cx="999" cy="354" r="10" fill="#000" opacity="0.55" filter="url(#spC)"/><ellipse cx="897" cy="389" rx="11" ry="10" fill="#000" opacity="0.9" filter="url(#spC)"/><ellipse cx="931" cy="389" rx="11" ry="10" fill="#000" opacity="0.9" filter="url(#spC)"/><ellipse cx="965" cy="389" rx="11" ry="10" fill="#000" opacity="0.9" filter="url(#spC)"/><ellipse cx="999" cy="389" rx="11" ry="10" fill="#000" opacity="0.9" filter="url(#spC)"/><path d="M989 378l5 4-3 1z" fill="#4a9a20"/><path d="M879 160V166H873Z" fill="#6f86e8"/><rect x="908.5" y="161.5" width="5" height="5" fill="#98a6f4"/><path d="M906.8 163.6h6.500M910.0 160.4v6.500" stroke="#000" stroke-width="1.400"/><rect x="942.5" y="161.5" width="5" height="5" fill="#98a6f4"/><path d="M940.8 163.6h6.500M944.0 160.4v6.500" stroke="#000" stroke-width="1.400"/><rect x="976.5" y="161.5" width="5" height="5" fill="#98a6f4"/><path d="M974.8 163.6h6.500M978.0 160.4v6.500" stroke="#000" stroke-width="1.400"/><rect x="1010.5" y="161.5" width="5" height="5" fill="#98a6f4"/><path d="M1008.8 163.6h6.500M1012.0 160.4v6.500" stroke="#000" stroke-width="1.400"/><rect x="874.5" y="195.5" width="5" height="5" fill="#98a6f4"/><path d="M872.8 197.6h6.500M876.0 194.4v6.500" stroke="#000" stroke-width="1.400"/><rect x="908.5" y="195.5" width="5" height="5" fill="#98a6f4"/><path d="M906.8 197.6h6.500M910.0 194.4v6.500" stroke="#000" stroke-width="1.400"/><rect x="942.5" y="195.5" width="5" height="5" fill="#f79a9a"/><path d="M940.8 197.6h6.500M944.0 194.4v6.500" stroke="#000" stroke-width="1.400"/><rect x="976.5" y="195.5" width="5" height="5" fill="#f79a9a"/><path d="M974.8 197.6h6.500M978.0 194.4v6.500" stroke="#000" stroke-width="1.400"/><rect x="1010.5" y="195.5" width="5" height="5" fill="#f79a9a"/><path d="M1008.8 197.6h6.500M1012.0 194.4v6.500" stroke="#000" stroke-width="1.400"/><path d="M879 228V234H873Z" fill="#f07878"/><path d="M906.8 231.6h6.500M910.0 228.4v6.500" stroke="#000" stroke-width="1.400"/><path d="M940.8 231.6h6.500M944.0 228.4v6.500" stroke="#000" stroke-width="1.400"/><path d="M974.8 231.6h6.500M978.0 228.4v6.500" stroke="#000" stroke-width="1.400"/><path d="M1008.8 231.6h6.500M1012.0 228.4v6.500" stroke="#000" stroke-width="1.400"/><rect x="874.5" y="263.5" width="5" height="5" fill="#f79a9a"/><path d="M872.8 265.6h6.500M876.0 262.40000000000003v6.500" stroke="#000" stroke-width="1.400"/><rect x="908.5" y="263.5" width="5" height="5" fill="#f79a9a"/><path d="M906.8 265.6h6.500M910.0 262.40000000000003v6.500" stroke="#000" stroke-width="1.400"/><path d="M940.8 265.6h6.500M944.0 262.40000000000003v6.500" stroke="#000" stroke-width="1.400"/><path d="M974.8 265.6h6.500M978.0 262.40000000000003v6.500" stroke="#000" stroke-width="1.400"/><rect x="1010.5" y="263.5" width="5" height="5" fill="#f79a9a"/><path d="M1008.8 265.6h6.500M1012.0 262.40000000000003v6.500" stroke="#000" stroke-width="1.400"/><rect x="874.5" y="297.5" width="5" height="5" fill="#f79a9a"/><path d="M872.8 299.6h6.500M876.0 296.40000000000003v6.500" stroke="#000" stroke-width="1.400"/><rect x="908.5" y="297.5" width="5" height="5" fill="#f79a9a"/><path d="M906.8 299.6h6.500M910.0 296.40000000000003v6.500" stroke="#000" stroke-width="1.400"/><path d="M940.8 299.6h6.500M944.0 296.40000000000003v6.500" stroke="#000" stroke-width="1.400"/><path d="M974.8 299.6h6.500M978.0 296.40000000000003v6.500" stroke="#000" stroke-width="1.400"/><path d="M1008.8 299.6h6.500M1012.0 296.40000000000003v6.500" stroke="#000" stroke-width="1.400"/><rect x="874.5" y="331.5" width="5" height="5" fill="#f79a9a"/><path d="M872.8 333.6h6.500M876.0 330.40000000000003v6.500" stroke="#000" stroke-width="1.400"/><path d="M913 330V336H907Z" fill="#f07878"/><path d="M940.8 333.6h6.500M944.0 330.40000000000003v6.500" stroke="#000" stroke-width="1.400"/><path d="M1008.8 333.6h6.500M1012.0 330.40000000000003v6.500" stroke="#000" stroke-width="1.400"/><rect x="874.5" y="365.5" width="5" height="5" fill="#f79a9a"/><path d="M872.8 367.6h6.500M876.0 364.40000000000003v6.500" stroke="#000" stroke-width="1.400"/><path d="M906.8 367.6h6.500M910.0 364.40000000000003v6.500" stroke="#000" stroke-width="1.400"/><path d="M940.8 367.6h6.500M944.0 364.40000000000003v6.500" stroke="#000" stroke-width="1.400"/><rect x="976.5" y="365.5" width="5" height="5" fill="#f79a9a"/><path d="M974.8 367.6h6.500M978.0 364.40000000000003v6.500" stroke="#000" stroke-width="1.400"/><path d="M1008.8 367.6h6.500M1012.0 364.40000000000003v6.500" stroke="#000" stroke-width="1.400"/></svg>
<!--/BRUSH-->

<div class="a" style="left:1016px;top:133px;width:25px;height:251px;background:#464646"></div>
<div class="a" style="left:1041px;top:132px;width:15px;height:253px;background:#252525"></div>
<div class="a" style="left:1042px;top:133px;width:13px;height:204px;background:#5c5c5c;border-radius:0 0 2px 2px"></div>
<div class="a" style="left:777px;top:386px;width:279px;height:32px;background:#333"></div>
<div class="a" style="left:780px;top:390px;width:272px;height:24px;background:#1e1e1e"></div>
<svg class="a" style="left:1032px;top:398px" width="10" height="8" viewBox="0 0 10 8"><rect x="0" y="0" width="10" height="8" fill="#2c2c2c"/><path d="M1.200 1.500L5 5.500 8.800 1.500" fill="none" stroke="#f2f2f2" stroke-width="1.800"/></svg>
<div class="a" style="left:780px;top:419px;width:276px;height:39px;box-sizing:border-box;border:1px solid #6c6c6c;background:#2e2e2e"></div>
<div class="a" style="left:1041px;top:420px;width:14px;height:37px;background:#454545"></div>
<div class="t" style="left:932px;width:100px;text-align:right;top:432px;font-size:12.300px;color:#dedede">10,0</div>
<svg class="a" style="left:1043px;top:425px" width="10" height="7" viewBox="0 0 10 7"><path d="M1.500 5.500L5 2 8.500 5.500" fill="none" stroke="#dcdcdc" stroke-width="1.800"/></svg>
<svg class="a" style="left:1043px;top:444px" width="10" height="7" viewBox="0 0 10 7"><path d="M1.500 1.500L5 5 8.500 1.500" fill="none" stroke="#dcdcdc" stroke-width="1.800"/></svg>
<svg class="a" style="left:908px;top:467px" width="16" height="16" viewBox="0 0 16 16"><path d="M1.500 2.500h9v7h-9z M10.500 6.500h4v7h-9v-4" fill="none" stroke="#c4c4c4" stroke-width="1.100"/></svg>
<svg class="a" style="left:964px;top:467px" width="16" height="16" viewBox="0 0 16 16"><rect x="0" y="0" width="16" height="16" rx="2" fill="#a4a4a4"/><path d="M4 4l8 8M12 4l-8 8" stroke="#444" stroke-width="2.600"/></svg>
<svg class="a" style="left:1020px;top:467px" width="16" height="16" viewBox="0 0 16 16"><path d="M12.500 5A6 6 0 1 0 13.800 9.500" fill="none" stroke="#c4c4c4" stroke-width="2"/><path d="M14.500 1v6h-6z" fill="#c4c4c4"/></svg>
<svg class="a" style="left:905px;top:495px" width="22" height="6" viewBox="0 0 22 6"><g fill="#bdbdbd"><circle cx="4" cy="3" r="1.900"/><circle cx="11" cy="3" r="1.900"/><circle cx="18" cy="3" r="1.900"/></g></svg>
<div class="a" style="left:772px;top:531px;width:290px;height:487px;background:#3c3c3c;border-top:1px solid #5a5a5a;box-sizing:border-box"></div>
<div class="a" style="left:780px;top:507px;width:201px;height:24px;background:#222"></div>
<div class="a" style="left:919px;top:507px;width:1px;height:24px;background:#3e3e3e"></div>
<div class="t" style="left:873px;top:514px;font-size:11.800px;color:#cfcfcf">Kanäle</div>
<svg class="a" style="left:922px;top:511px" width="17" height="16" viewBox="0 0 17 16"><g stroke="#d0d0d0" fill="none"><path d="M1 3.500h15" stroke-width="1.500"/><path d="M2 13C3.500 7.500 6 5.500 8.500 5.500S13.500 7.500 15 13" stroke-width="2"/></g><rect x="0" y="2" width="3" height="3" fill="#d0d0d0"/><rect x="14" y="2" width="3" height="3" fill="#d0d0d0"/><rect x="7" y="1.500" width="3.500" height="4" fill="#d0d0d0"/></svg>
<div class="t" style="left:940.500px;top:514px;font-size:11.800px;color:#cfcfcf">Pfade</div>
<svg class="a" style="left:1044px;top:513px" width="11" height="11" viewBox="0 0 11 11"><rect x=".5" y=".5" width="9.500" height="9.500" fill="none" stroke="#cfcfcf"/><path d="M8.200 2.200V8.300L2.800 5.250Z" fill="#cfcfcf"/></svg>
<div class="a" style="left:780px;top:534px;width:229px;height:28px;background:#242424;border-radius:0 4px 4px 0"></div>
<div class="t" style="left:940px;top:544px;font-size:11.900px;color:#dcdcdc">Normal</div>
<svg class="a" style="left:989px;top:544px" width="14" height="10" viewBox="0 0 14 10"><path d="M1.500 2L7 7.500 12.500 2" fill="none" stroke="#e8e8e8" stroke-width="1.600"/></svg>
<div class="a" style="left:1010px;top:534px;width:46px;height:28px;background:#2e2e2e;border-radius:4px"></div>
<svg class="a" style="left:1014px;top:541px" width="16" height="16" viewBox="0 0 16 16"><path d="M4.200 4.500A5.500 5.500 0 1 1 8.500 13.500" fill="none" stroke="#c9c9c9" stroke-width="1.700"/><path d="M1 5.800l5.300 .800L5.200 1.200z" fill="#c9c9c9"/><circle cx="3.800" cy="12.200" r="2.200" fill="#c9c9c9"/></svg>
<svg class="a" style="left:1036px;top:544px" width="14" height="10" viewBox="0 0 14 10"><path d="M1.500 2L7 7.500 12.500 2" fill="none" stroke="#e8e8e8" stroke-width="1.600"/></svg>
<div class="a" style="left:780px;top:564px;width:276px;height:39px;box-sizing:border-box;border:1px solid #707070;background:#555"></div>
<div class="a" style="left:1040px;top:565px;width:15px;height:37px;background:#484848;border-left:1px solid #3a3a3a;box-sizing:border-box"></div>
<div class="t" style="left:932px;width:100px;text-align:right;top:577px;font-size:12.300px;color:#dedede">100,0</div>
<svg class="a" style="left:1043px;top:570px" width="10" height="7" viewBox="0 0 10 7"><path d="M1.500 5.500L5 2 8.500 5.500" fill="none" stroke="#707070" stroke-width="1.800"/></svg>
<svg class="a" style="left:1043px;top:589px" width="10" height="7" viewBox="0 0 10 7"><path d="M1.500 1.500L5 5 8.500 1.500" fill="none" stroke="#dcdcdc" stroke-width="1.800"/></svg>
<svg class="a" style="left:866px;top:612px" width="16" height="16" viewBox="0 0 16 16"><path d="M6 5.500h8M11.500 3l3 2.500-3 2.500M15 10.500h-8M9.500 8l-3 2.500 3 2.500" fill="none" stroke="#b0b0b0" stroke-width="1.300"/></svg>
<svg class="a" style="left:898px;top:612px" width="16" height="16" viewBox="0 0 16 16"><rect x="0" y="0" width="4" height="4" fill="#b4b4b4"/><rect x="0" y="4" width="4" height="4" fill="#5e5e5e"/><rect x="0" y="8" width="4" height="4" fill="#b4b4b4"/><rect x="0" y="12" width="4" height="4" fill="#5e5e5e"/><rect x="4" y="0" width="4" height="4" fill="#5e5e5e"/><rect x="4" y="4" width="4" height="4" fill="#b4b4b4"/><rect x="4" y="8" width="4" height="4" fill="#5e5e5e"/><rect x="4" y="12" width="4" height="4" fill="#b4b4b4"/><rect x="8" y="0" width="4" height="4" fill="#b4b4b4"/><rect x="8" y="4" width="4" height="4" fill="#5e5e5e"/><rect x="8" y="8" width="4" height="4" fill="#b4b4b4"/><rect x="8" y="12" width="4" height="4" fill="#5e5e5e"/><rect x="12" y="0" width="4" height="4" fill="#5e5e5e"/><rect x="12" y="4" width="4" height="4" fill="#b4b4b4"/><rect x="12" y="8" width="4" height="4" fill="#5e5e5e"/><rect x="12" y="12" width="4" height="4" fill="#b4b4b4"/></svg>
<div class="a" style="left:777px;top:637px;width:279px;height:346px;background:#303030"></div>
<div class="a" style="left:777px;top:638px;width:279px;height:38px;background:#1e1e1e"></div>
<!--THUMB-->
<svg class="a" style="left:860px;top:641px" width="32" height="32" viewBox="0 0 225 225"><use href="#flw"/></svg>
<!--/THUMB-->

<svg class="a" style="left:896px;top:639px" width="36" height="36" viewBox="0 0 36 36"><rect x="0" y="0" width="36" height="36" rx="1.500" fill="#fff"/><rect x="3.500" y="3.500" width="29" height="29" fill="none" stroke="#a2a2a2" stroke-width="2"/><rect x="5" y="5" width="26" height="26" fill="none" stroke="#fff" stroke-width="1.600" stroke-dasharray="2 2.330"/></svg>
<div class="t" style="left:936px;top:651px;font-size:12.500px;color:#e2e2e2">Eingefügte Ebene</div>
<div class="a" style="left:858px;top:677px;width:36px;height:36px;background:#0c0c0c"></div>
<div class="a" style="left:860px;top:679px;width:32px;height:32px;background:#9bc57e"></div>
<div class="t" style="left:898px;top:689px;font-size:12.500px;color:#bdbdbd">Ebene</div>
<svg class="a" style="left:785px;top:992px" width="16" height="16" viewBox="0 0 16 16"><path d="M4.500 5.500v9h9v-8l-3-3h-3" fill="none" stroke="#c6c6c6" stroke-width="1.300"/><path d="M10.500 3.500v3h3" fill="none" stroke="#c6c6c6" stroke-width="1.300"/><path d="M0 3.500h7M3.500 0v7" stroke="#c6c6c6" stroke-width="2"/></svg>
<svg class="a" style="left:821px;top:992px" width="16" height="16" viewBox="0 0 16 16"><path d="M1 1h6l1.500 2.500H15V15H1z" fill="#c6c6c6"/><path d="M5.500 9.500h7M9 6v7" stroke="#3e3e3e" stroke-width="2"/></svg>
<svg class="a" style="left:856px;top:992px" width="16" height="16" viewBox="0 0 16 16"><path d="M2 11l6-6 6 6" fill="none" stroke="#c6c6c6" stroke-width="1.800"/></svg>
<svg class="a" style="left:891px;top:992px" width="16" height="16" viewBox="0 0 16 16"><path d="M2 5l6 6 6-6" fill="none" stroke="#c6c6c6" stroke-width="1.800"/></svg>
<svg class="a" style="left:926px;top:992px" width="16" height="16" viewBox="0 0 16 16"><path d="M1.500 2.500h9v7h-9z M10.500 6.500h4v7h-9v-4" fill="none" stroke="#c6c6c6" stroke-width="1.100"/></svg>
<svg class="a" style="left:961px;top:992px" width="16" height="16" viewBox="0 0 16 16"><circle cx="8" cy="3" r="1.800" fill="none" stroke="#c6c6c6" stroke-width="1.300"/><path d="M8 5v9.500M4.500 7.500h7M1.500 10c.5 3 3 4.500 6.500 4.500s6-1.500 6.500-4.500" fill="none" stroke="#c6c6c6" stroke-width="1.500"/><path d="M0 11.500l1.500-3 2 2.800zM16 11.500l-1.500-3-2 2.800z" fill="#c6c6c6"/></svg>
<svg class="a" style="left:996px;top:992px" width="16" height="16" viewBox="0 0 16 16"><path d="M4 0h9v5c0 2-2 4-4.500 4S4 7 4 5z" fill="#c6c6c6"/><path d="M3.500 10.500H15L12 15.500H0z" fill="#c6c6c6"/><circle cx="6.700" cy="3" r="1" fill="#3e3e3e"/><circle cx="10.300" cy="3" r="1" fill="#3e3e3e"/><path d="M6.500 5.800c1 1 3 1 4 0" stroke="#3e3e3e" fill="none"/></svg>
<svg class="a" style="left:1031px;top:992px" width="16" height="16" viewBox="0 0 16 16"><rect x="0" y="0" width="16" height="16" rx="2" fill="#c6c6c6"/><path d="M4 4l8 8M12 4l-8 8" stroke="#333" stroke-width="2.600"/></svg>
<div class="a menu" style="left:575px;top:-2px;width:299px;height:786px">
<div class="mi" style="top:3px"><svg class="ic" viewBox="0 0 16 16"><path d="M0 3.500h7.500M0 7.500h5M0 11.500h3.500M0 15.200h12.500" stroke="#c6c6c6" stroke-width="1.500" fill="none"/><path d="M5.300 13l.900-3.600 6.300-6.300 2.700 2.700-6.300 6.300z" fill="#c6c6c6"/><path d="M13.300 2.300l1.200-1.200 2.700 2.700-1.200 1.200z" fill="#c6c6c6"/></svg><span class="lb">Ebeneneigenschaften ...</span></div>
<div class="mi" style="top:29px"><svg class="arr" viewBox="0 0 8 14"><path d="M1.200 1.500L6.800 7 1.200 12.500" fill="none" stroke="#e4e4e4" stroke-width="1.500"/></svg><span class="lb">Farbverlaufsraum</span></div>
<div class="mi sel" style="top:55px"><svg class="arr" viewBox="0 0 8 14"><path d="M1.200 1.500L6.800 7 1.200 12.500" fill="none" stroke="#e4e4e4" stroke-width="1.500"/></svg><span class="lb">Kompositionsraum</span></div>
<div class="mi" style="top:81px"><svg class="arr" viewBox="0 0 8 14"><path d="M1.200 1.500L6.800 7 1.200 12.500" fill="none" stroke="#e4e4e4" stroke-width="1.500"/></svg><span class="lb">Kompositionsmodus</span></div>
<div class="mi" style="top:107px"><svg class="arr" viewBox="0 0 8 14"><path d="M1.200 1.500L6.800 7 1.200 12.500" fill="none" stroke="#e4e4e4" stroke-width="1.500"/></svg><span class="lb">Farbmarkierung</span></div>
<div class="mi" style="top:146px"><svg class="ic" viewBox="0 0 16 16"><path d="M3.500 5.500v9h9v-8l-3-3h-3" fill="none" stroke="#c6c6c6" stroke-width="1.300"/><path d="M0 3.500h7M3.500 0v7" stroke="#c6c6c6" stroke-width="2"/></svg><span class="lb">Neue Ebene ...</span></div>
<div class="mi" style="top:172px"><span class="lb">Neu aus Sichtbarem</span></div>
<div class="mi" style="top:198px"><svg class="ic" viewBox="0 0 16 16"><path d="M0 1h6l1.500 2.500H16V16H0z" fill="#c6c6c6"/><path d="M5 10h8M9 6v8" stroke="#444" stroke-width="2"/></svg><span class="lb">Neue Ebenengruppe</span></div>
<div class="mi" style="top:224px"><svg class="ic" viewBox="0 0 16 16"><path d="M1.500 2.500h9v7h-9z M10.500 6.500h4v7h-9v-4" fill="none" stroke="#c6c6c6" stroke-width="1.300"/></svg><span class="lb">Ebene duplizieren</span></div>
<div class="mi dis" style="top:250px"><svg class="ic" viewBox="0 0 16 16"><g stroke-dasharray="1.200 .8"><circle cx="8" cy="3" r="1.800" fill="none" stroke="#c6c6c6" stroke-width="1.300"/><path d="M8 5v9.500M4.500 7.500h7M1.500 10c.5 3 3 4.500 6.500 4.500s6-1.500 6.500-4.500" fill="none" stroke="#c6c6c6" stroke-width="1.500"/></g><path d="M0 11.500l1.500-3 2 2.800zM16 11.500l-1.500-3-2 2.800z" fill="#c6c6c6"/></svg><span class="lb">Ebene verankern</span></div>
<div class="mi" style="top:276px"><svg class="ic" viewBox="0 0 16 16"><path d="M2.500 2h7l-2 2.500h-7zM2.500 6.500h7l-2 2.500h-7zM2.500 11h7l-2 2.500h-7z" fill="#c6c6c6"/><path d="M13 2v10M10.500 9.500L13 13l2.500-3.500" stroke="#c6c6c6" stroke-width="1.600" fill="none"/></svg><span class="lb">Nach unten vereinen</span></div>
<div class="mi" style="top:302px"><svg class="ic" viewBox="0 0 16 16"><rect x="0" y="0" width="16" height="16" rx="2" fill="#c6c6c6"/><path d="M4 4l8 8M12 4l-8 8" stroke="#3a3a3a" stroke-width="2.600"/></svg><span class="lb">Ebene löschen</span></div>
<div class="mi" style="top:341px"><svg class="ic" viewBox="0 0 16 16"><rect x="5.5" y="5.5" width="9.5" height="9" fill="none" stroke="#c6c6c6" stroke-width="1.300"/><rect x="7.5" y="7.5" width="5.5" height="4" fill="#8a8a8a"/><path d="M5 2h9M11.500 0l3 2-3 2M2 5v9M0 11.500l2 3 2-3" stroke="#c6c6c6" stroke-width="1.300" fill="none"/></svg><span class="lb">Ebenengröße ...</span></div>
<div class="mi" style="top:367px"><svg class="ic" viewBox="0 0 16 16"><rect x="0.5" y="0.5" width="10.5" height="8" fill="none" stroke="#c6c6c6" stroke-width="1.300"/><rect x="2.5" y="2.5" width="6" height="3.5" fill="#8a8a8a"/><path d="M3 10.500H16L12.500 15.500H0z" fill="#c6c6c6"/><path d="M16 4.500h-3.500M14 3l-1.800 1.500 1.800 1.500" stroke="#c6c6c6" stroke-width="1.200" fill="none"/></svg><span class="lb">Ebene auf Bildgröße</span></div>
<div class="mi" style="top:393px"><svg class="ic" viewBox="0 0 16 16"><rect x="5.5" y="5.5" width="9.5" height="9" fill="none" stroke="#c6c6c6" stroke-width="1.300"/><rect x="7.5" y="7.5" width="5.5" height="4" fill="#8a8a8a"/><path d="M.5.5l4 4M4.800 1.500v3.300H1.500" stroke="#c6c6c6" stroke-width="1.300" fill="none"/></svg><span class="lb">Ebene skalieren ...</span></div>
<div class="mi dis" style="top:432px"><svg class="ic" viewBox="0 0 16 16"><g opacity=".8"><path d="M4 0h9v5c0 2-2 4-4.500 4S4 7 4 5z" fill="#c6c6c6" stroke-dasharray="1 1"/><path d="M3.500 10.500H15.500L12 15.500H0z" fill="#9c9c9c"/><circle cx="6.700" cy="3" r="1" fill="#4a4a4a"/><circle cx="10.300" cy="3" r="1" fill="#4a4a4a"/><path d="M6.500 5.800c1 1 3 1 4 0" stroke="#4a4a4a" fill="none"/></g></svg><span class="lb">Ebenenmaske hinzufügen ...</span></div>
<div class="mi" style="top:458px"><span class="lb">Ebenenmaske anwenden</span></div>
<div class="mi" style="top:484px"><svg class="ic" viewBox="0 0 16 16"><rect x="0" y="0" width="16" height="16" rx="2" fill="#c6c6c6"/><path d="M4 4l8 8M12 4l-8 8" stroke="#3a3a3a" stroke-width="2.600"/></svg><span class="lb">Ebenenmaske löschen</span></div>
<div class="mi" style="top:523px"><span class="chk"></span><span class="lb">Ebenenmaske anzeigen</span></div>
<div class="mi" style="top:549px"><span class="chk"><svg style="position:absolute;left:0;top:0" width="13" height="13" viewBox="0 0 13 13"><path d="M3.500 3.500l6 6M9.500 3.500l-6 6" stroke="#fff" stroke-width="2.200"/></svg></span><span class="lb">Ebenenmaske bearbeiten</span></div>
<div class="mi" style="top:575px"><span class="chk"></span><span class="lb">Ebenenmaske deaktivieren</span></div>
<div class="mi" style="top:601px"><svg class="ic" viewBox="0 0 16 16"><rect x="2.500" y="2.500" width="11" height="11" fill="#7a7a7a"/><rect x=".75" y=".75" width="14.500" height="14.500" fill="none" stroke="#bdbdbd" stroke-width="1.300" stroke-dasharray="1.400 1.500"/><circle cx="8" cy="8" r="4.200" fill="#6e6e6e" stroke="#9a9a9a" stroke-width="1"/><path d="M3.800 8.500a4.200 4.200 0 0 0 8.400 0" fill="none" stroke="#c8c8c8" stroke-width="1.200"/></svg><span class="lb">Auswahl aus Maske</span></div>
<div class="mi dis" style="top:640px"><svg class="ic" viewBox="0 0 16 16"><rect x="0" y="0" width="4" height="4" fill="#a8a8a8"/><rect x="0" y="4" width="4" height="4" fill="#6a6a6a"/><rect x="0" y="8" width="4" height="4" fill="#a8a8a8"/><rect x="0" y="12" width="4" height="4" fill="#6a6a6a"/><rect x="4" y="0" width="4" height="4" fill="#6a6a6a"/><rect x="4" y="4" width="4" height="4" fill="#a8a8a8"/><rect x="4" y="8" width="4" height="4" fill="#6a6a6a"/><rect x="4" y="12" width="4" height="4" fill="#a8a8a8"/><rect x="8" y="0" width="4" height="4" fill="#a8a8a8"/><rect x="8" y="4" width="4" height="4" fill="#6a6a6a"/><rect x="8" y="8" width="4" height="4" fill="#a8a8a8"/><rect x="8" y="12" width="4" height="4" fill="#6a6a6a"/><rect x="12" y="0" width="4" height="4" fill="#6a6a6a"/><rect x="12" y="4" width="4" height="4" fill="#a8a8a8"/><rect x="12" y="8" width="4" height="4" fill="#6a6a6a"/><rect x="12" y="12" width="4" height="4" fill="#a8a8a8"/></svg><span class="lb">Alphakanal hinzufügen</span></div>
<div class="mi" style="top:666px"><span class="lb">Alphakanal entfernen</span></div>
<div class="mi" style="top:692px"><svg class="ic" viewBox="0 0 16 16"><rect x="2.500" y="2.500" width="11" height="11" fill="#7a7a7a"/><rect x=".75" y=".75" width="14.500" height="14.500" fill="none" stroke="#bdbdbd" stroke-width="1.300" stroke-dasharray="1.400 1.500"/><circle cx="8" cy="8" r="4.200" fill="#6e6e6e" stroke="#9a9a9a" stroke-width="1"/><path d="M3.800 8.500a4.200 4.200 0 0 0 8.400 0" fill="none" stroke="#c8c8c8" stroke-width="1.200"/></svg><span class="lb">Auswahl aus Alphakanal</span></div>
<div class="mi" style="top:731px"><span class="lb">Sichtbare Ebenen vereinen ...</span></div>
<div class="mi" style="top:757px"><span class="lb">Bild zusammenfügen</span></div>
<div class="sep" style="top:137px"></div>
<div class="sep" style="top:332px"></div>
<div class="sep" style="top:423px"></div>
<div class="sep" style="top:514px"></div>
<div class="sep" style="top:631px"></div>
<div class="sep" style="top:722px"></div>
</div>
<div class="a menu" style="left:365px;top:52px;width:212px;height:82px">
<div class="mi" style="top:1px;left:-1px;right:-1px"><span class="rad"></span><span class="lb" style="left:29px">Auto</span></div>
<div class="mi" style="top:27px;left:-1px;right:-1px"><span class="rad"></span><span class="lb" style="left:29px">RGB (linear)</span></div>
<div class="mi sel" style="top:53px;left:-1px;right:-1px"><svg class="ic" style="left:5px" viewBox="0 0 16 16"><circle cx="8.500" cy="8" r="2.300" fill="#fff"/></svg><span class="lb" style="left:29px">RGB (Wahrnehmung)</span></div>
</div>
<div class="a" style="left:504px;top:130px;width:407px;height:24px;box-sizing:border-box;background:#3b3b3b;border:1px solid #606060;border-radius:4px;box-shadow:0 1px 3px rgba(0,0,0,.4)"><span class="t" style="left:4px;top:4px;line-height:16px;font-size:14.500px;color:#dedede">Ebenen-Kompositionsraum: RGB (nach Wahrnehmung)</span></div>
<svg class="a" style="left:749.7px;top:50.0px" width="37.6" height="37.6"><circle cx="18.8" cy="18.8" r="15.8" fill="none" stroke="#f00" stroke-width="2"/></svg>
<svg class="a" style="left:496.59999999999997px;top:97.7px" width="37.6" height="37.6"><circle cx="18.8" cy="18.8" r="15.8" fill="none" stroke="#f00" stroke-width="2"/></svg>
<svg class="a" style="left:861.6px;top:633.8000000000001px" width="37.6" height="37.6"><circle cx="18.8" cy="18.8" r="15.8" fill="none" stroke="#f00" stroke-width="2"/></svg>
<svg class="a" style="left:1005px;top:523.6px" width="52" height="52"><circle cx="26" cy="26" r="23" fill="none" stroke="#f00" stroke-width="4"/></svg>
<div class="t red" style="left:762px;top:58.800px;font-size:20px">2</div>
<div class="t red" style="left:509px;top:106.500px;font-size:20px">3</div>
<div class="t red" style="left:873.500px;top:641px;font-size:22px;-webkit-text-stroke:.5px #f00">1</div>
<div class="t red" style="left:729.500px;top:610.800px;font-size:20.700px;font-weight:700;line-height:24.800px">Rechtsklick
auf
Ebene</div>
</body></html>
